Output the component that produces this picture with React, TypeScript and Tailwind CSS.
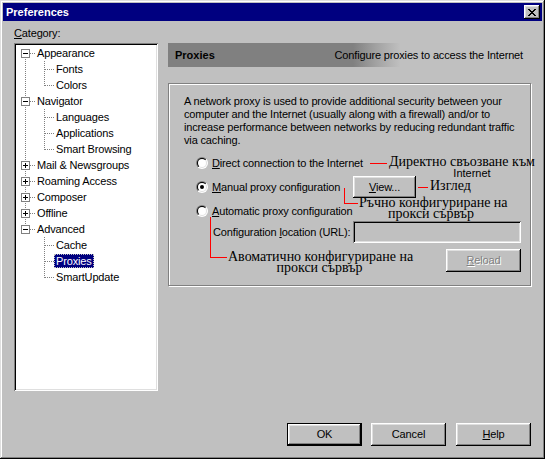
import React from "react";

type Kind = "open" | "closed" | "child";

interface TreeItem {
  label: string;
  kind: Kind;
  selected?: boolean;
}

const tree: TreeItem[] = [
  { label: "Appearance", kind: "open" },
  { label: "Fonts", kind: "child" },
  { label: "Colors", kind: "child" },
  { label: "Navigator", kind: "open" },
  { label: "Languages", kind: "child" },
  { label: "Applications", kind: "child" },
  { label: "Smart Browsing", kind: "child" },
  { label: "Mail & Newsgroups", kind: "closed" },
  { label: "Roaming Access", kind: "closed" },
  { label: "Composer", kind: "closed" },
  { label: "Offline", kind: "closed" },
  { label: "Advanced", kind: "open" },
  { label: "Cache", kind: "child" },
  { label: "Proxies", kind: "child", selected: true },
  { label: "SmartUpdate", kind: "child" },
];

// parent row -> last child row
const groups = [
  [0, 2],
  [3, 6],
  [11, 14],
];

const raised =
  "shadow-[inset_-1px_-1px_0_#000,inset_1px_1px_0_#fff,inset_-2px_-2px_0_#808080,inset_2px_2px_0_#dfdfdf]";

function TreeLines() {
  const cy = (i: number) => 8 + 16 * i;
  return (
    <svg
      className="absolute left-[2px] top-[2px] pointer-events-none"
      width="140"
      height="344"
      shapeRendering="crispEdges"
    >
      <line x1="9.5" y1={cy(0)} x2="9.5" y2={cy(11)} stroke="#808080" strokeDasharray="1 1" />
      {groups.map(([p, last]) => (
        <line
          key={p}
          x1="28.5"
          y1={cy(p) + 8}
          x2="28.5"
          y2={cy(last) + 1}
          stroke="#808080"
          strokeDasharray="1 1"
        />
      ))}
      {tree.map((t, i) =>
        t.kind === "child" ? (
          <line key={i} x1="29" y1={cy(i) + 0.5} x2="38" y2={cy(i) + 0.5} stroke="#808080" strokeDasharray="1 1" />
        ) : (
          <line key={i} x1="14" y1={cy(i) + 0.5} x2="20" y2={cy(i) + 0.5} stroke="#808080" strokeDasharray="1 1" />
        )
      )}
      {tree.map((t, i) =>
        t.kind === "child" ? null : (
          <g key={"b" + i}>
            <rect x="5.5" y={cy(i) - 3.5} width="8" height="8" fill="#fff" stroke="#808080" />
            <line x1="7" y1={cy(i) + 0.5} x2="12" y2={cy(i) + 0.5} stroke="#000" />
            {t.kind === "closed" && (
              <line x1="9.5" y1={cy(i) - 2} x2="9.5" y2={cy(i) + 3} stroke="#000" />
            )}
          </g>
        )
      )}
    </svg>
  );
}

function Radio({ checked }: { checked?: boolean }) {
  return (
    <svg width="12" height="12" viewBox="0 0 12 12" className="shrink-0">
      <defs>
        <linearGradient id="radioOuter" x1="0" y1="0" x2="1" y2="1">
          <stop offset="0.5" stopColor="#808080" />
          <stop offset="0.5" stopColor="#ffffff" />
        </linearGradient>
        <linearGradient id="radioInner" x1="0" y1="0" x2="1" y2="1">
          <stop offset="0.5" stopColor="#000000" />
          <stop offset="0.5" stopColor="#dfdfdf" />
        </linearGradient>
      </defs>
      <circle cx="6" cy="6" r="6" fill="url(#radioOuter)" />
      <circle cx="6" cy="6" r="5" fill="url(#radioInner)" />
      <circle cx="6" cy="6" r="4" fill="#fff" />
      {checked && <circle cx="6" cy="6" r="2" fill="#000" />}
    </svg>
  );
}

function CloseButton() {
  return (
    <div className={`w-[16px] h-[14px] bg-[#c0c0c0] flex items-center justify-center ${raised}`}>
      <svg width="8" height="7" viewBox="0 0 8 7" shapeRendering="crispEdges">
        <path
          d="M0 0h2v1H0zM6 0h2v1H6zM1 1h2v1H1zM5 1h2v1H5zM2 2h4v1H2zM3 3h2v1H3zM2 4h4v1H2zM1 5h2v1H1zM5 5h2v1H5zM0 6h2v1H0zM6 6h2v1H6z"
          fill="#000"
        />
      </svg>
    </div>
  );
}

export default function App() {
  return (
    <div className="w-[545px] h-[459px] bg-[#c0c0c0] p-[3px] flex flex-col font-['Liberation_Sans',Arial,sans-serif] text-[11px] leading-[13px] tracking-[-0.15px] text-black shadow-[inset_-1px_-1px_0_#000,inset_1px_1px_0_#dfdfdf,inset_-2px_-2px_0_#808080,inset_2px_2px_0_#fff]">
      {/* Title bar */}
      <div className="h-[18px] bg-[#000080] flex items-center justify-between pl-[3px] pr-[2px]">
        <span className="text-white font-bold text-[11px] tracking-normal">Preferences</span>
        <CloseButton />
      </div>

      <div className="flex px-[11px] gap-[10px]">
        {/* Category tree */}
        <div className="w-[144px] flex flex-col">
          <div className="mt-[6px] h-[13px]">
            <span className="underline underline-offset-[1px]">C</span>ategory:
          </div>
          <div className="relative mt-[3px] h-[348px] bg-white p-[2px] shadow-[inset_1px_1px_0_#808080,inset_-1px_-1px_0_#fff,inset_2px_2px_0_#000,inset_-2px_-2px_0_#dfdfdf]">
            <TreeLines />
            <div className="relative flex flex-col">
              {tree.map((t) => (
                <div
                  key={t.label}
                  className={`h-[16px] flex items-center ${t.kind === "child" ? "pl-[38px]" : "pl-[19px]"}`}
                >
                  {t.selected ? (
                    <span className="h-[14px] leading-[12px] px-[1px] bg-[#000080] text-white border border-dotted border-[#c0c0c0]">
                      {t.label}
                    </span>
                  ) : (
                    <span className="h-[14px] leading-[14px] px-[2px]">{t.label}</span>
                  )}
                </div>
              ))}
            </div>
          </div>
        </div>

        {/* Right panel */}
        <div className="w-[363px] pt-[22px] flex flex-col">
          <div className="h-[24px] flex items-center justify-between pl-[7px] pr-[8px] bg-[linear-gradient(90deg,#808080_51%,#a0a0a0_57%,#c0c0c0_64%)]">
            <span className="font-bold tracking-normal">Proxies</span>
            <span>Configure proxies to access the Internet</span>
          </div>

          <div className="relative mt-[16px] h-[203px] border border-[#808080] shadow-[inset_1px_1px_0_#fff,1px_1px_0_#fff] pt-[11px]">
            <p className="pl-[15px] whitespace-nowrap">
              A network proxy is used to provide additional security between your
              <br />
              computer and the Internet (usually along with a firewall) and/or to
              <br />
              increase performance between networks by reducing redundant traffic
              <br />
              via caching.
            </p>

            <div className="pl-[27px] flex flex-col w-[352px]">
              <div className="mt-[8px] h-[16px] flex items-center gap-[4px]">
                <Radio />
                <span>
                  <span className="underline underline-offset-[1px]">D</span>irect connection to the Internet
                </span>
              </div>
              <div className="mt-[5px] h-[22px] flex items-center">
                <div className="w-[157px] flex items-center gap-[4px]">
                  <Radio checked />
                  <span className="whitespace-nowrap">
                    <span className="underline underline-offset-[1px]">M</span>anual proxy configuration
                  </span>
                </div>
                <button className={`w-[63px] h-[22px] bg-[#c0c0c0] flex items-center justify-center ${raised}`}>
                  <span>
                    <span className="underline underline-offset-[1px]">V</span>iew...
                  </span>
                </button>
              </div>
              <div className="mt-[5px] h-[16px] flex items-center gap-[4px]">
                <Radio />
                <span>
                  <span className="underline underline-offset-[1px]">A</span>utomatic proxy configuration
                </span>
              </div>
              <div className="mt-[2px] h-[22px] flex items-center w-[325px]">
                <div className="w-[157px] pl-[17px] whitespace-nowrap">
                  Configuration <span className="underline underline-offset-[1px]">l</span>ocation (URL):
                </div>
                <div className="w-[168px] h-[22px] bg-[#c0c0c0] shadow-[inset_1px_1px_0_#808080,inset_-1px_-1px_0_#fff,inset_2px_2px_0_#000,inset_-2px_-2px_0_#dfdfdf]" />
              </div>
              <div className="mt-[6px] flex w-[325px] justify-end">
                <button className={`w-[75px] h-[23px] bg-[#c0c0c0] flex items-center justify-center text-[#808080] [text-shadow:1px_1px_0_#fff] ${raised}`}>
                  <span>
                    <span className="underline underline-offset-[1px]">R</span>eload
                  </span>
                </button>
              </div>
            </div>

            {/* Annotations */}
            <div className="absolute left-[201px] top-[79px] w-[17px] h-[1px] bg-[#ff0000]" />
            <div className="absolute left-[220px] top-[72px] w-[146px] text-center whitespace-nowrap font-['Liberation_Serif',serif] text-[14px] leading-[11px] tracking-normal">
              Директно свъозване към
              <br />
              <span className="inline-block pl-[20px] font-['Liberation_Sans',Arial,sans-serif] text-[11px]">Internet</span>
            </div>

            <div className="absolute left-[249px] top-[103px] w-[10px] h-[1px] bg-[#ff0000]" />
            <div className="absolute left-[261px] top-[96px] whitespace-nowrap font-['Liberation_Serif',serif] text-[14px] leading-[11px] tracking-normal">
              Изглед
            </div>

            <div className="absolute left-[175px] top-[104px] w-[1px] h-[16px] bg-[#ff0000]" />
            <div className="absolute left-[175px] top-[119px] w-[14px] h-[1px] bg-[#ff0000]" />
            <div className="absolute left-[190px] top-[113px] w-[144px] text-center whitespace-nowrap font-['Liberation_Serif',serif] text-[14px] leading-[11px] tracking-normal">
              Ръчно конфигуриране на
              <br />
              прокси сървър
            </div>

            <div className="absolute left-[41px] top-[133px] w-[1px] h-[41px] bg-[#ff0000]" />
            <div className="absolute left-[41px] top-[173px] w-[17px] h-[1px] bg-[#ff0000]" />
            <div className="absolute left-[59px] top-[167px] w-[183px] text-center whitespace-nowrap font-['Liberation_Serif',serif] text-[14px] leading-[11px] tracking-normal">
              Авоматично конфигуриране на
              <br />
              прокси сървър
            </div>
          </div>
        </div>
      </div>

      {/* Dialog buttons */}
      <div className="mt-[32px] flex justify-end pr-[11px]">
        <button className={`w-[75px] h-[23px] border border-black bg-[#c0c0c0] flex items-center justify-center ${raised}`}>
          OK
        </button>
        <button className={`ml-[9px] w-[75px] h-[23px] bg-[#c0c0c0] flex items-center justify-center ${raised}`}>
          Cancel
        </button>
        <button className={`ml-[10px] w-[75px] h-[23px] bg-[#c0c0c0] flex items-center justify-center ${raised}`}>
          <span>
            <span className="underline underline-offset-[1px]">H</span>elp
          </span>
        </button>
      </div>
    </div>
  );
}
